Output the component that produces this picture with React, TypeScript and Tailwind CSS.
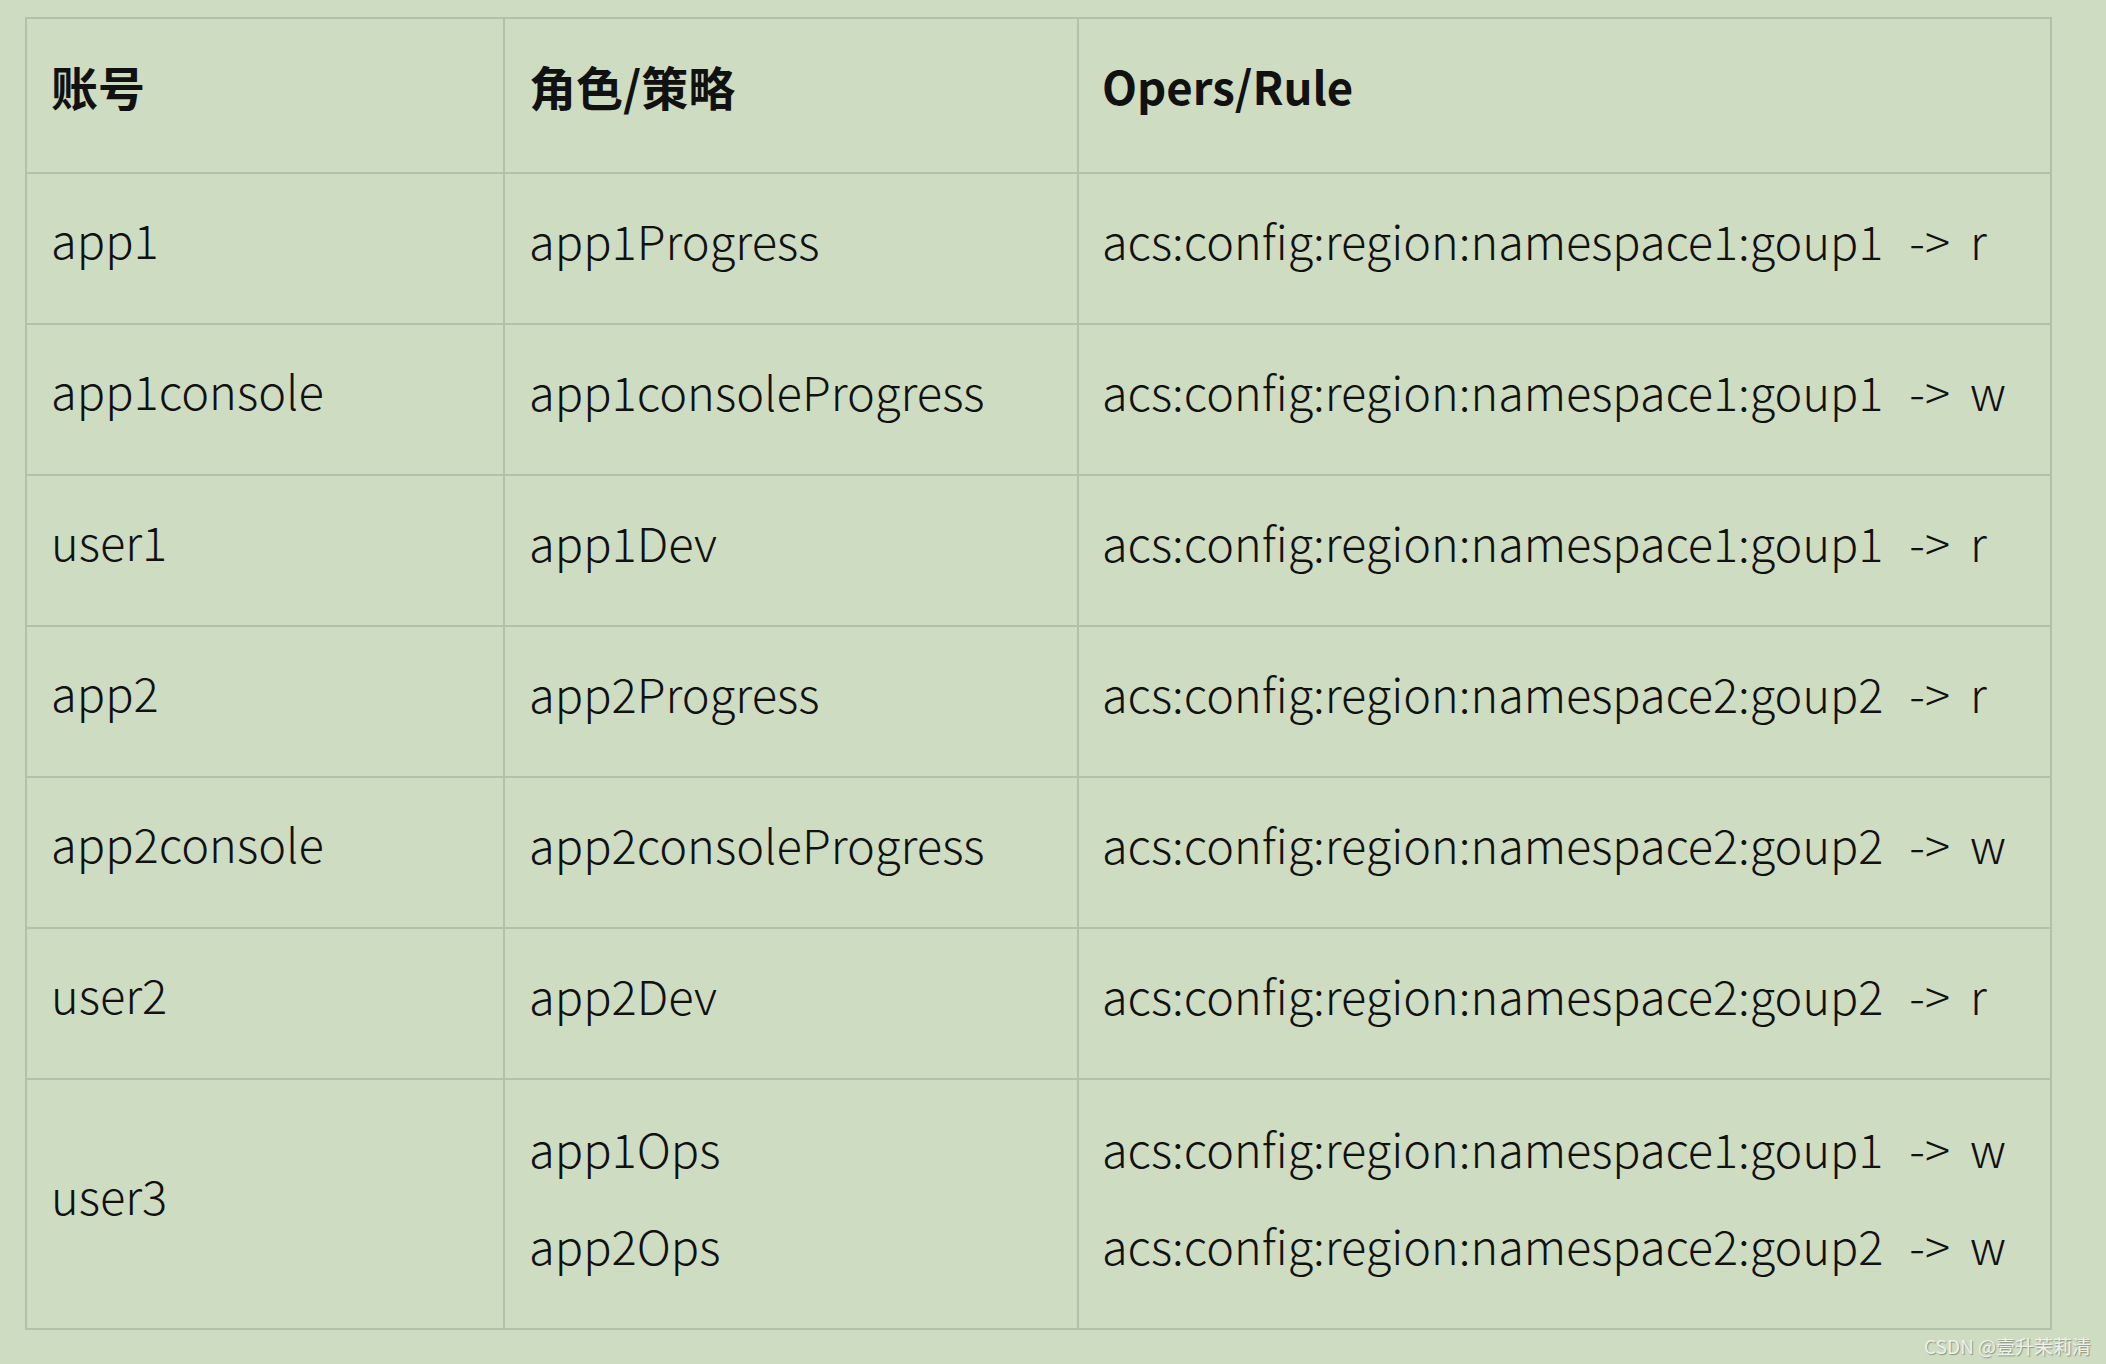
import React from "react";

type Row = { account: string; roles: string[]; rules: { rule: string; perm: string }[]; tall?: boolean };

const rows: Row[] = [
  { account: "app1", roles: ["app1Progress"], rules: [{ rule: "acs:config:region:namespace1:goup1", perm: "r" }] },
  { account: "app1console", roles: ["app1consoleProgress"], rules: [{ rule: "acs:config:region:namespace1:goup1", perm: "w" }] },
  { account: "user1", roles: ["app1Dev"], rules: [{ rule: "acs:config:region:namespace1:goup1", perm: "r" }] },
  { account: "app2", roles: ["app2Progress"], rules: [{ rule: "acs:config:region:namespace2:goup2", perm: "r" }] },
  { account: "app2console", roles: ["app2consoleProgress"], rules: [{ rule: "acs:config:region:namespace2:goup2", perm: "w" }] },
  { account: "user2", roles: ["app2Dev"], rules: [{ rule: "acs:config:region:namespace2:goup2", perm: "r" }] },
  {
    account: "user3",
    roles: ["app1Ops", "app2Ops"],
    rules: [
      { rule: "acs:config:region:namespace1:goup1", perm: "w" },
      { rule: "acs:config:region:namespace2:goup2", perm: "w" },
    ],
    tall: true,
  },
];

const font = { fontFamily: '"Noto Sans CJK SC", "Noto Sans", sans-serif' };

export default function App() {
  return (
    <div className="w-[2106px] h-[1364px] bg-[#cedcc2] text-[#111111] pt-[17px] pl-[25px]" style={font}>
      <div className="w-[2027px] grid grid-cols-[476px_572px_971px] gap-[2px] p-[2px] bg-[#b2c1aa]">
        <div className="bg-[#cedcc2] h-[153px] flex items-center pl-[24px] pb-[20px] text-[47px] font-bold leading-none">账号</div>
        <div className="bg-[#cedcc2] h-[153px] flex items-center pl-[24px] pb-[20px] text-[47px] font-bold leading-none">角色/策略</div>
        <div className="bg-[#cedcc2] h-[153px] flex items-center pl-[23px] pb-[20px] text-[45.5px] font-bold leading-none">Opers/Rule</div>
        {rows.map((r) => (
          <React.Fragment key={r.account}>
            <div className={`bg-[#cedcc2] ${r.tall ? "h-[248px]" : "h-[149px]"} flex items-center pl-[24px] pb-[18px] text-[47px] font-light`}>
              {r.account}
            </div>
            <div className={`bg-[#cedcc2] ${r.tall ? "h-[248px] pb-[16px]" : "h-[149px] pb-[18px]"} flex flex-col justify-center pl-[24px] text-[47px] leading-[97px] font-light`}>
              {r.roles.map((x) => (
                <div key={x}>{x}</div>
              ))}
            </div>
            <div className={`bg-[#cedcc2] ${r.tall ? "h-[248px] pb-[16px]" : "h-[149px] pb-[18px]"} flex flex-col justify-center pl-[23px] text-[46.8px] leading-[97px] font-light`}>
              {r.rules.map((x, i) => (
                <div key={i} className="whitespace-nowrap">
                  <span>{x.rule}</span>
                  <span className="ml-[26px]">-&gt;</span>
                  <span className="ml-[20px]">{x.perm}</span>
                </div>
              ))}
            </div>
          </React.Fragment>
        ))}
      </div>
      <div className="w-[2066px] flex justify-end mt-[4px]">
        <span className="text-[19px] leading-[24px] text-[#eef2ea] [text-shadow:1px_1px_1px_#8a9484]">CSDN @壹升茉莉清</span>
      </div>
    </div>
  );
}
